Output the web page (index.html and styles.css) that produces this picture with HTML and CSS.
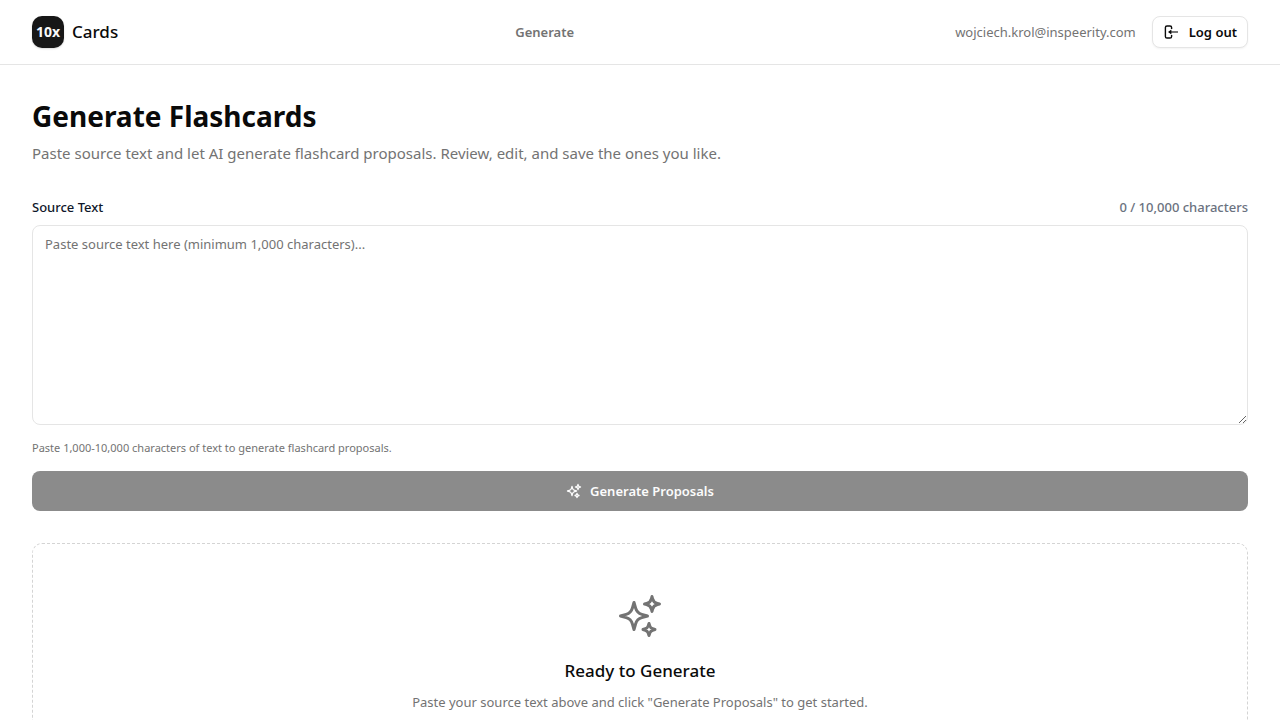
FILE: index.html
```html
<!DOCTYPE html>
<html lang="en">
<head>
  <meta charset="utf-8">
  <meta name="viewport" content="width=device-width, initial-scale=1">
  <title>Generate Flashcards</title>
  <link rel="stylesheet" href="styles.css">
</head>
<body>
  <svg class="sprite" aria-hidden="true">
    <symbol id="sparkles" viewBox="0 0 24 24">
      <path d="M9.813 15.904L9 18.75l-.813-2.846a4.5 4.5 0 00-3.09-3.09L2.25 12l2.846-.813a4.5 4.5 0 003.09-3.09L9 5.25l.813 2.846a4.5 4.5 0 003.09 3.09L15.75 12l-2.846.813a4.5 4.5 0 00-3.09 3.09zM18.259 8.715L18 9.75l-.259-1.035a3.375 3.375 0 00-2.455-2.456L14.25 6l1.036-.259a3.375 3.375 0 002.455-2.456L18 2.25l.259 1.035a3.375 3.375 0 002.456 2.456L21.75 6l-1.035.259a3.375 3.375 0 00-2.456 2.456zM16.894 20.567L16.5 21.75l-.394-1.183a2.25 2.25 0 00-1.423-1.423L13.5 18.75l1.183-.394a2.25 2.25 0 001.423-1.423l.394-1.183.394 1.183a2.25 2.25 0 001.423 1.423l1.183.394-1.183.394a2.25 2.25 0 00-1.423 1.423z"/>
    </symbol>
  </svg>

  <header class="header">
    <a class="brand" href="#">
      <span class="brand-mark">10x</span>
      <span class="brand-name">Cards</span>
    </a>
    <nav class="nav">
      <a class="nav-link" href="#">Generate</a>
    </nav>
    <div class="account">
      <span class="email">wojciech.krol@inspeerity.com</span>
      <button class="logout" type="button">
        <svg class="icon-logout" viewBox="0 0 16 16" aria-hidden="true">
          <path class="door" d="M8.6 5V3.6a1.6 1.6 0 0 0-1.6-1.6H4A1.6 1.6 0 0 0 2.4 3.6v8.8A1.6 1.6 0 0 0 4 14h3a1.6 1.6 0 0 0 1.6-1.6V11"/>
          <path class="shaft" d="M15 8H6"/>
          <path class="head" d="M8.4 5.4V10.6L5 8z"/>
        </svg>
        Log out
      </button>
    </div>
  </header>

  <main class="main">
    <section class="intro">
      <h1 class="title">Generate Flashcards</h1>
      <p class="subtitle">Paste source text and let AI generate flashcard proposals. Review, edit, and save the ones you like.</p>
    </section>

    <form class="form">
      <div class="field-head">
        <label class="label" for="source-text">Source Text</label>
        <span class="counter">0 / 10,000 characters</span>
      </div>
      <textarea class="source" id="source-text" aria-describedby="source-help" placeholder="Paste source text here (minimum 1,000 characters)..."></textarea>
      <p class="help" id="source-help">Paste 1,000-10,000 characters of text to generate flashcard proposals.</p>
      <button class="generate" type="submit" disabled>
        <svg class="icon-small" aria-hidden="true"><use href="#sparkles"/></svg>
        Generate Proposals
      </button>
    </form>

    <section class="empty">
      <svg class="icon-large" aria-hidden="true"><use href="#sparkles"/></svg>
      <h2 class="empty-title">Ready to Generate</h2>
      <p class="empty-text">Paste your source text above and click "Generate Proposals" to get started.</p>
    </section>
  </main>
</body>
</html>
```
FILE: styles.css
```css
* {
  box-sizing: border-box;
  margin: 0;
}

:root {
  --ink: #0a0a0a;
  --muted: #737373;
  --line: #e5e5e5;
}

body {
  background: #fff;
  color: var(--ink);
  font-family: "Segoe UI", "Noto Sans", "Open Sans", sans-serif;
  font-size: 13px;
  line-height: 20px;
}

button,
textarea {
  font: inherit;
}

a {
  color: inherit;
  text-decoration: none;
}

.sprite {
  position: absolute;
  width: 0;
  height: 0;
}

.header {
  display: flex;
  align-items: center;
  justify-content: space-between;
  padding: 16px 32px;
  border-bottom: 1px solid var(--line);
}

.brand {
  display: flex;
  align-items: center;
  gap: 8px;
}

.brand-mark {
  display: grid;
  place-items: center;
  width: 32px;
  height: 32px;
  border-radius: 10px;
  background: #171717;
  color: #fafafa;
  font-size: 14px;
  font-weight: 700;
  box-shadow: 0 1px 2px rgba(0, 0, 0, 0.15);
}

.brand-name {
  font-size: 17px;
  font-weight: 500;
}

.nav {
  padding-left: 16px;
}

.nav-link {
  color: var(--muted);
  font-weight: 600;
}

.account {
  display: flex;
  align-items: center;
  gap: 16px;
}

.email {
  color: var(--muted);
}

.logout {
  display: flex;
  align-items: center;
  gap: 10px;
  height: 32px;
  padding: 0 10px;
  border: 1px solid var(--line);
  border-radius: 8px;
  background: #fff;
  color: var(--ink);
  font-weight: 600;
  box-shadow: 0 1px 2px rgba(0, 0, 0, 0.05);
}

.icon-logout {
  width: 16px;
  height: 16px;
  fill: none;
  stroke: currentColor;
}

.door {
  stroke-width: 1.4;
}

.shaft {
  stroke-width: 1.1;
}

.head {
  fill: currentColor;
  stroke: none;
}

.icon-small,
.icon-large {
  fill: none;
  stroke: currentColor;
  stroke-width: 1.5;
  stroke-linecap: round;
  stroke-linejoin: round;
}

.icon-small {
  width: 16px;
  height: 16px;
  stroke-width: 2;
}

.icon-large {
  width: 48px;
  height: 48px;
  color: var(--muted);
}

.main {
  display: flex;
  flex-direction: column;
  gap: 32px;
  padding: 32px;
}

.title {
  margin-bottom: 6px;
  font-size: 28px;
  font-weight: 700;
  line-height: 38px;
}

.subtitle {
  color: var(--muted);
  font-size: 15px;
  line-height: 24px;
}

.form {
  display: flex;
  flex-direction: column;
}

.field-head {
  display: flex;
  justify-content: space-between;
  margin-bottom: 8px;
  font-weight: 500;
}

.label {
  color: #0f172a;
}

.counter {
  color: #6b7280;
}

.source {
  height: 200px;
  padding: 8px 12px;
  border: 1px solid var(--line);
  border-radius: 8px;
  background: #fff;
  color: var(--ink);
  resize: vertical;
}

.source::placeholder {
  color: var(--muted);
}

.help {
  margin: 15px 0;
  color: var(--muted);
  font-size: 11px;
  line-height: 16px;
}

.generate {
  display: flex;
  align-items: center;
  justify-content: center;
  gap: 8px;
  height: 40px;
  border: 0;
  border-radius: 8px;
  background: #8b8b8b;
  color: #fcfcfc;
  font-weight: 600;
}

.empty {
  display: flex;
  flex-direction: column;
  align-items: center;
  padding: 48px;
  border: 1px dashed #d4d4d4;
  border-radius: 10px;
  text-align: center;
}

.empty-title {
  margin: 16px 0 6px;
  font-size: 17px;
  font-weight: 500;
  line-height: 30px;
}

.empty-text {
  color: var(--muted);
}
```
